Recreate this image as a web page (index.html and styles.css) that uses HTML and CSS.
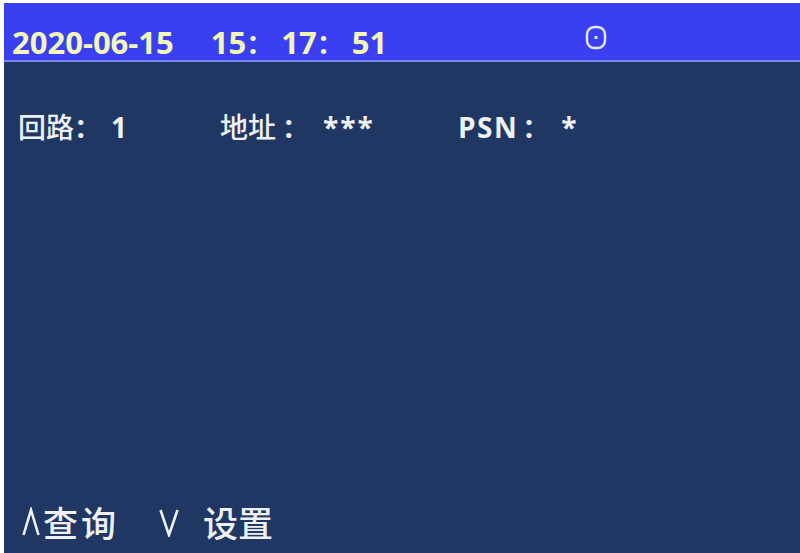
FILE: index.html
```html
<!DOCTYPE html>
<html lang="zh">
<head>
<meta charset="utf-8">
<link rel="stylesheet" href="styles.css">
</head>
<body>
<div class="screen">
  <div class="header">
    <div class="clock">
      <span class="date">2020-06-15</span>
      <span class="t">15</span><span class="colon">：</span>
      <span class="t">17</span><span class="colon">：</span>
      <span class="t">51</span>
    </div>
    <div class="icon">
      <svg width="22" height="25" viewBox="0 0 22 25"><rect x="2" y="2" width="18" height="21" rx="7.5" ry="7.5" fill="none" stroke="#e6e8ff" stroke-width="2.4"/><rect x="9.5" y="11" width="3" height="3" fill="#e6e8ff"/></svg>
    </div>
  </div>
  <div class="content">
    <div class="info">
      <span class="item loop"><span class="cjk">回路</span><span class="colon2 c1">：</span><span class="val">1</span></span>
      <span class="item addr"><span class="cjk">地址</span><span class="colon2 c2">：</span><span class="val stars">***</span></span>
      <span class="item psn"><span class="lat">PSN</span><span class="colon2 c3">：</span><span class="val">*</span></span>
    </div>
    <div class="footer">
      <span class="key">
        <svg class="arrow" width="18" height="30" viewBox="0 0 18 30"><polyline points="1.5,28 9,3 16.5,28" fill="none" stroke="#eef0f4" stroke-width="2.6"/></svg>
        <span class="cjk k1">查询</span>
      </span>
      <span class="key key2">
        <svg class="arrow" width="20" height="30" viewBox="0 0 20 30"><polyline points="1.5,3 10,28 18.5,3" fill="none" stroke="#eef0f4" stroke-width="2.6"/></svg>
        <span class="cjk k2">设置</span>
      </span>
    </div>
  </div>
</div>
</body>
</html>
```
FILE: styles.css
```css
html, body {
  margin: 0;
  padding: 0;
  background: #ffffff;
}
body {
  width: 800px;
  height: 553px;
  overflow: hidden;
}
.screen {
  margin: 3px 0 0 4px;
  height: 550px;
  background: #1f3762;
  display: flex;
  flex-direction: column;
  font-family: "Open Sans", "Noto Sans CJK SC", sans-serif;
}
.header {
  height: 57px;
  background: #3a40f2;
  border-bottom: 2px solid #7d86f5;
  display: flex;
  align-items: center;
}
.clock {
  margin-left: 8px;
  margin-top: 22px;
  color: #f3f7b6;
  font-weight: 700;
  font-size: 31px;
  line-height: 1;
  display: flex;
  align-items: baseline;
}
.date { margin-right: 37px; }
.colon {
  font-family: "Noto Sans CJK SC", sans-serif;
  font-weight: 700;
  font-size: 27px;
  margin-right: 8px;
}
.icon {
  margin-left: 198px;
  margin-top: 12px;
  display: flex;
}
.content {
  flex: 1;
  display: flex;
  flex-direction: column;
  justify-content: space-between;
}
.info {
  display: flex;
  align-items: baseline;
  margin: 50px 0 0 14px;
  color: #eef0f4;
  font-size: 28px;
  line-height: 1;
  font-weight: 700;
}
.cjk {
  font-family: "Noto Sans CJK SC", sans-serif;
  font-weight: 500;
}
.colon2 {
  font-family: "Noto Sans CJK SC", sans-serif;
  font-weight: 700;
  font-size: 27px;
}
.c1 { margin-right: 10px; }
.c2 { margin-left: 6px; margin-right: 14px; }
.c3 { margin-left: 4px; margin-right: 12px; }
.val, .lat {
  font-family: "Open Sans", sans-serif;
  font-weight: 700;
}
.stars { letter-spacing: 2px; }
.lat { letter-spacing: 1.5px; }
.loop { width: 202px; }
.addr { width: 238px; }
.footer {
  display: flex;
  align-items: center;
  margin: 0 0 14px 18px;
  color: #eef0f4;
  font-size: 35px;
  line-height: 1;
}
.key {
  display: flex;
  align-items: center;
}
.arrow { display: block; }
.k1 { margin-left: 3px; letter-spacing: 3px; }
.key2 { margin-left: 40px; }
.k2 { margin-left: 24px; }
```
